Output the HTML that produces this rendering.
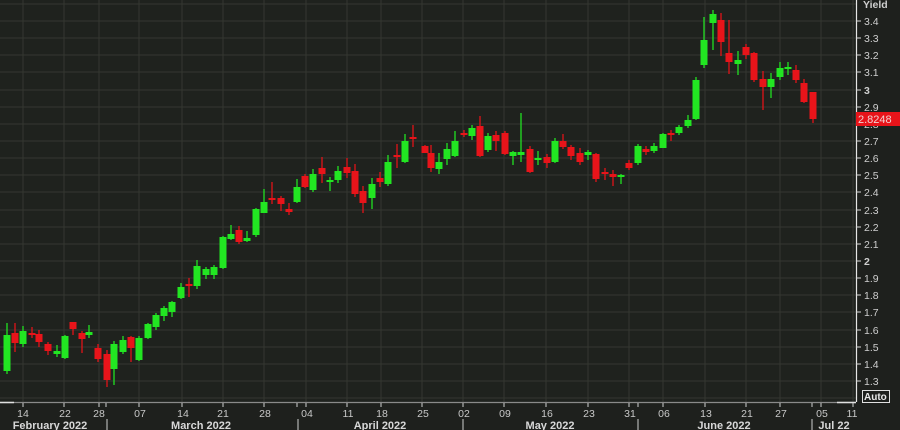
<!DOCTYPE html>
<html><head><meta charset="utf-8"><style>
html,body{margin:0;padding:0;background:#1e201d;}
svg{display:block;font-family:"Liberation Sans",sans-serif;}
</style></head><body>
<svg width="900" height="430" viewBox="0 0 900 430" xmlns="http://www.w3.org/2000/svg">
<rect width="900" height="430" fill="#1e201d"/>
<rect width="856" height="402" fill="#1f221e"/>
<g stroke="#343731" stroke-width="1">
<path d="M0 4H856M0 21H856M0 38H856M0 55H856M0 72H856M0 90H856M0 107H856M0 124H856M0 141H856M0 158H856M0 175H856M0 192H856M0 210H856M0 227H856M0 244H856M0 261H856M0 278H856M0 295H856M0 312H856M0 330H856M0 347H856M0 364H856M0 381H856M0 398H856"/>
<path d="M23 0V402M64 0V402M99 0V402M139 0V402M182 0V402M223 0V402M264 0V402M306 0V402M347 0V402M381 0V402M422 0V402M463 0V402M504 0V402M546 0V402M588 0V402M629 0V402M663 0V402M705 0V402M746 0V402M780 0V402M821 0V402M853 0V402"/>
</g>
<g stroke="#22e022" stroke-width="1.3" fill="#22e622">
<path d="M7 323V374M23 326V347M57 345V357M65 335V359M89 325V338M114 341V385M123 336V354M139 336V361M148 323V339M156 313V330M164 306V321M172 301V317M181 283V299M197 260V289M206 267V279M214 265V279M223 236V269M231 225V240M247 231V242M256 208V237M264 189V213M297 179V203M313 169V192M330 177V191M338 166V183M372 178V209M388 155V186M405 134V163M439 153V174M447 143V165M455 131V157M472 125V140M488 133V152M513 151V165M521 113V162M538 151V165M555 138V163M588 150V160M621 174V184M638 144V165M654 143V153M663 133V148M679 125V135M688 115V128M696 77V120M704 17V68M713 10V50M738 51V75M771 73V98M780 62V80M788 62V75"/>
<g stroke="none">
<rect x="3.5" y="335" width="7" height="36"/><rect x="19.5" y="331" width="7" height="13"/><rect x="53.5" y="351" width="7" height="3"/><rect x="61.5" y="336" width="7" height="22"/><rect x="85.5" y="332" width="7" height="3"/><rect x="110.5" y="344" width="7" height="25"/><rect x="119.5" y="340" width="7" height="12"/><rect x="135.5" y="338" width="7" height="22"/><rect x="144.5" y="324" width="7" height="14"/><rect x="152.5" y="315" width="7" height="12"/><rect x="160.5" y="308" width="7" height="8"/><rect x="168.5" y="302" width="7" height="10"/><rect x="177.5" y="287" width="7" height="11"/><rect x="193.5" y="266" width="7" height="20"/><rect x="202.5" y="269" width="7" height="6"/><rect x="210.5" y="267" width="7" height="8"/><rect x="219.5" y="237" width="7" height="31"/><rect x="227.5" y="234" width="7" height="5"/><rect x="243.5" y="238" width="7" height="3"/><rect x="252.5" y="209" width="7" height="26"/><rect x="260.5" y="202" width="7" height="11"/><rect x="293.5" y="187" width="7" height="15"/><rect x="309.5" y="174" width="7" height="16"/><rect x="326.5" y="180" width="7" height="2"/><rect x="334.5" y="171" width="7" height="9"/><rect x="368.5" y="184" width="7" height="14"/><rect x="384.5" y="162" width="7" height="22"/><rect x="401.5" y="141" width="7" height="21"/><rect x="435.5" y="162" width="7" height="7"/><rect x="443.5" y="149" width="7" height="10"/><rect x="451.5" y="141" width="7" height="15"/><rect x="468.5" y="128" width="7" height="8"/><rect x="484.5" y="136" width="7" height="14"/><rect x="509.5" y="152" width="7" height="4"/><rect x="517.5" y="152" width="7" height="3"/><rect x="534.5" y="158" width="7" height="2"/><rect x="551.5" y="141" width="7" height="21"/><rect x="584.5" y="152" width="7" height="3"/><rect x="617.5" y="175" width="7" height="2"/><rect x="634.5" y="146" width="7" height="17"/><rect x="650.5" y="146" width="7" height="5"/><rect x="659.5" y="134" width="7" height="14"/><rect x="675.5" y="127" width="7" height="6"/><rect x="684.5" y="120" width="7" height="6"/><rect x="692.5" y="80" width="7" height="39"/><rect x="700.5" y="40" width="7" height="25"/><rect x="709.5" y="14" width="7" height="9"/><rect x="734.5" y="60" width="7" height="4"/><rect x="767.5" y="79" width="7" height="8"/><rect x="776.5" y="68" width="7" height="9"/><rect x="784.5" y="67" width="7" height="2"/>
</g></g>
<g stroke="#e01418" stroke-width="1.3" fill="#e8141a">
<path d="M15 323V352M32 327V338M39 330V347M48 342V355M73 322V335M82 331V353M98 344V362M107 350V387M131 336V362M189 278V297M239 226V244M272 182V204M281 196V211M289 203V215M305 174V188M322 157V183M347 158V178M355 164V197M363 186V213M380 172V187M397 144V168M413 125V147M425 145V153M431 145V172M464 130V137M480 116V157M496 131V151M505 131V155M530 146V173M547 154V168M563 134V149M571 145V160M580 148V165M596 153V182M605 168V180M613 170V186M629 160V170M646 146V155M671 130V141M721 13V56M729 20V74M746 44V59M754 52V82M763 71V110M796 65V83M804 79V103M813 92V123"/>
<g stroke="none">
<rect x="11.5" y="333" width="7" height="10"/><rect x="28.5" y="333" width="7" height="2"/><rect x="35.5" y="334" width="7" height="8"/><rect x="44.5" y="344" width="7" height="7"/><rect x="69.5" y="322" width="7" height="7"/><rect x="78.5" y="333" width="7" height="6"/><rect x="94.5" y="348" width="7" height="11"/><rect x="103.5" y="354" width="7" height="26"/><rect x="127.5" y="337" width="7" height="11"/><rect x="185.5" y="284" width="7" height="2"/><rect x="235.5" y="230" width="7" height="12"/><rect x="268.5" y="198" width="7" height="2"/><rect x="277.5" y="198" width="7" height="6"/><rect x="285.5" y="209" width="7" height="3"/><rect x="301.5" y="176" width="7" height="11"/><rect x="318.5" y="168" width="7" height="6"/><rect x="343.5" y="167" width="7" height="6"/><rect x="351.5" y="171" width="7" height="23"/><rect x="359.5" y="191" width="7" height="12"/><rect x="376.5" y="178" width="7" height="4"/><rect x="393.5" y="155" width="7" height="2"/><rect x="409.5" y="137" width="7" height="2"/><rect x="421.5" y="146" width="7" height="7"/><rect x="427.5" y="153" width="7" height="15"/><rect x="460.5" y="133" width="7" height="2"/><rect x="476.5" y="126" width="7" height="30"/><rect x="492.5" y="135" width="7" height="6"/><rect x="501.5" y="133" width="7" height="21"/><rect x="526.5" y="149" width="7" height="23"/><rect x="543.5" y="157" width="7" height="6"/><rect x="559.5" y="141" width="7" height="6"/><rect x="567.5" y="147" width="7" height="9"/><rect x="576.5" y="153" width="7" height="9"/><rect x="592.5" y="154" width="7" height="25"/><rect x="601.5" y="172" width="7" height="2"/><rect x="609.5" y="174" width="7" height="3"/><rect x="625.5" y="163" width="7" height="5"/><rect x="642.5" y="149" width="7" height="3"/><rect x="667.5" y="133" width="7" height="2"/><rect x="717.5" y="20" width="7" height="22"/><rect x="725.5" y="53" width="7" height="9"/><rect x="742.5" y="47" width="7" height="8"/><rect x="750.5" y="53" width="7" height="27"/><rect x="759.5" y="79" width="7" height="8"/><rect x="792.5" y="70" width="7" height="10"/><rect x="800.5" y="83" width="7" height="19"/><rect x="809.5" y="92" width="7" height="27"/>
</g></g>
<!-- right axis -->
<rect x="856" y="0" width="44" height="430" fill="#1e201d"/>
<path d="M856.5 0V402" stroke="#e6e6e6" stroke-width="1.2"/>
<g stroke="#d8d8d8" stroke-width="1"><path d="M856 21H861M856 38H861M856 55H861M856 72H861M856 90H861M856 107H861M856 124H861M856 141H861M856 158H861M856 175H861M856 192H861M856 210H861M856 227H861M856 244H861M856 261H861M856 278H861M856 295H861M856 312H861M856 330H861M856 347H861M856 364H861M856 381H861"/></g>
<g fill="#cfcfcf" font-size="10.5">
<text x="863" y="8" font-weight="bold">Yield</text>
<text x="864" y="25">3.4</text><text x="864" y="42">3.3</text><text x="864" y="59">3.2</text><text x="864" y="76">3.1</text><text x="864" y="94" font-weight="bold">3</text><text x="864" y="111">2.9</text><text x="864" y="128">2.8</text><text x="864" y="145">2.7</text><text x="864" y="162">2.6</text><text x="864" y="179">2.5</text><text x="864" y="196">2.4</text><text x="864" y="214">2.3</text><text x="864" y="231">2.2</text><text x="864" y="248">2.1</text><text x="864" y="265" font-weight="bold">2</text><text x="864" y="282">1.9</text><text x="864" y="299">1.8</text><text x="864" y="316">1.7</text><text x="864" y="334">1.6</text><text x="864" y="351">1.5</text><text x="864" y="368">1.4</text><text x="864" y="385">1.3</text>
</g>
<rect x="856" y="112" width="44" height="14" fill="#e8141a"/>
<text x="858" y="123" fill="#f0d0d0" font-size="11">2.8248</text>
<rect x="862.5" y="390.5" width="27" height="12" fill="none" stroke="#e0e0e0"/>
<text x="864" y="400" fill="#e8e8e8" font-size="10" font-weight="bold">Auto</text>
<!-- bottom axis -->
<path d="M0 402.5H856" stroke="#8a8a8a" stroke-width="1.2"/>
<path d="M0 402.5H14" stroke="#e0e0e0" stroke-width="1.5"/>
<path d="M837 402.5H856" stroke="#e0e0e0" stroke-width="1.5"/>
<g stroke="#cfcfcf"><path d="M23 403V407M64 403V407M99 403V407M106 403V407M139 403V407M182 403V407M223 403V407M264 403V407M297 403V407M306 403V407M347 403V407M381 403V407M422 403V407M463 403V407M504 403V407M546 403V407M588 403V407M629 403V407M638 403V407M663 403V407M705 403V407M746 403V407M780 403V407M812 403V407M821 403V407M853 403V407"/>
<path d="M107 419V430M298 419V430M463 419V430M638 419V430M812 419V430"/></g>
<g fill="#c8c8c8" font-size="10.5" text-anchor="middle">
<text x="23" y="417">14</text><text x="65" y="417">22</text><text x="99" y="417">28</text><text x="140" y="417">07</text><text x="183" y="417">14</text><text x="223" y="417">21</text><text x="265" y="417">28</text><text x="307" y="417">04</text><text x="348" y="417">11</text><text x="382" y="417">18</text><text x="423" y="417">25</text><text x="464" y="417">02</text><text x="505" y="417">09</text><text x="547" y="417">16</text><text x="589" y="417">23</text><text x="630" y="417">31</text><text x="664" y="417">06</text><text x="706" y="417">13</text><text x="747" y="417">21</text><text x="781" y="417">27</text><text x="822" y="417">05</text><text x="852" y="417">11</text>
</g>
<g fill="#d8d8d8" font-size="11" font-weight="bold" text-anchor="middle">
<text x="50" y="429">February 2022</text><text x="201" y="429">March 2022</text><text x="380" y="429">April 2022</text><text x="550" y="429">May 2022</text><text x="724" y="429">June 2022</text><text x="834" y="429">Jul 22</text>
</g>
</svg>
</body></html>
